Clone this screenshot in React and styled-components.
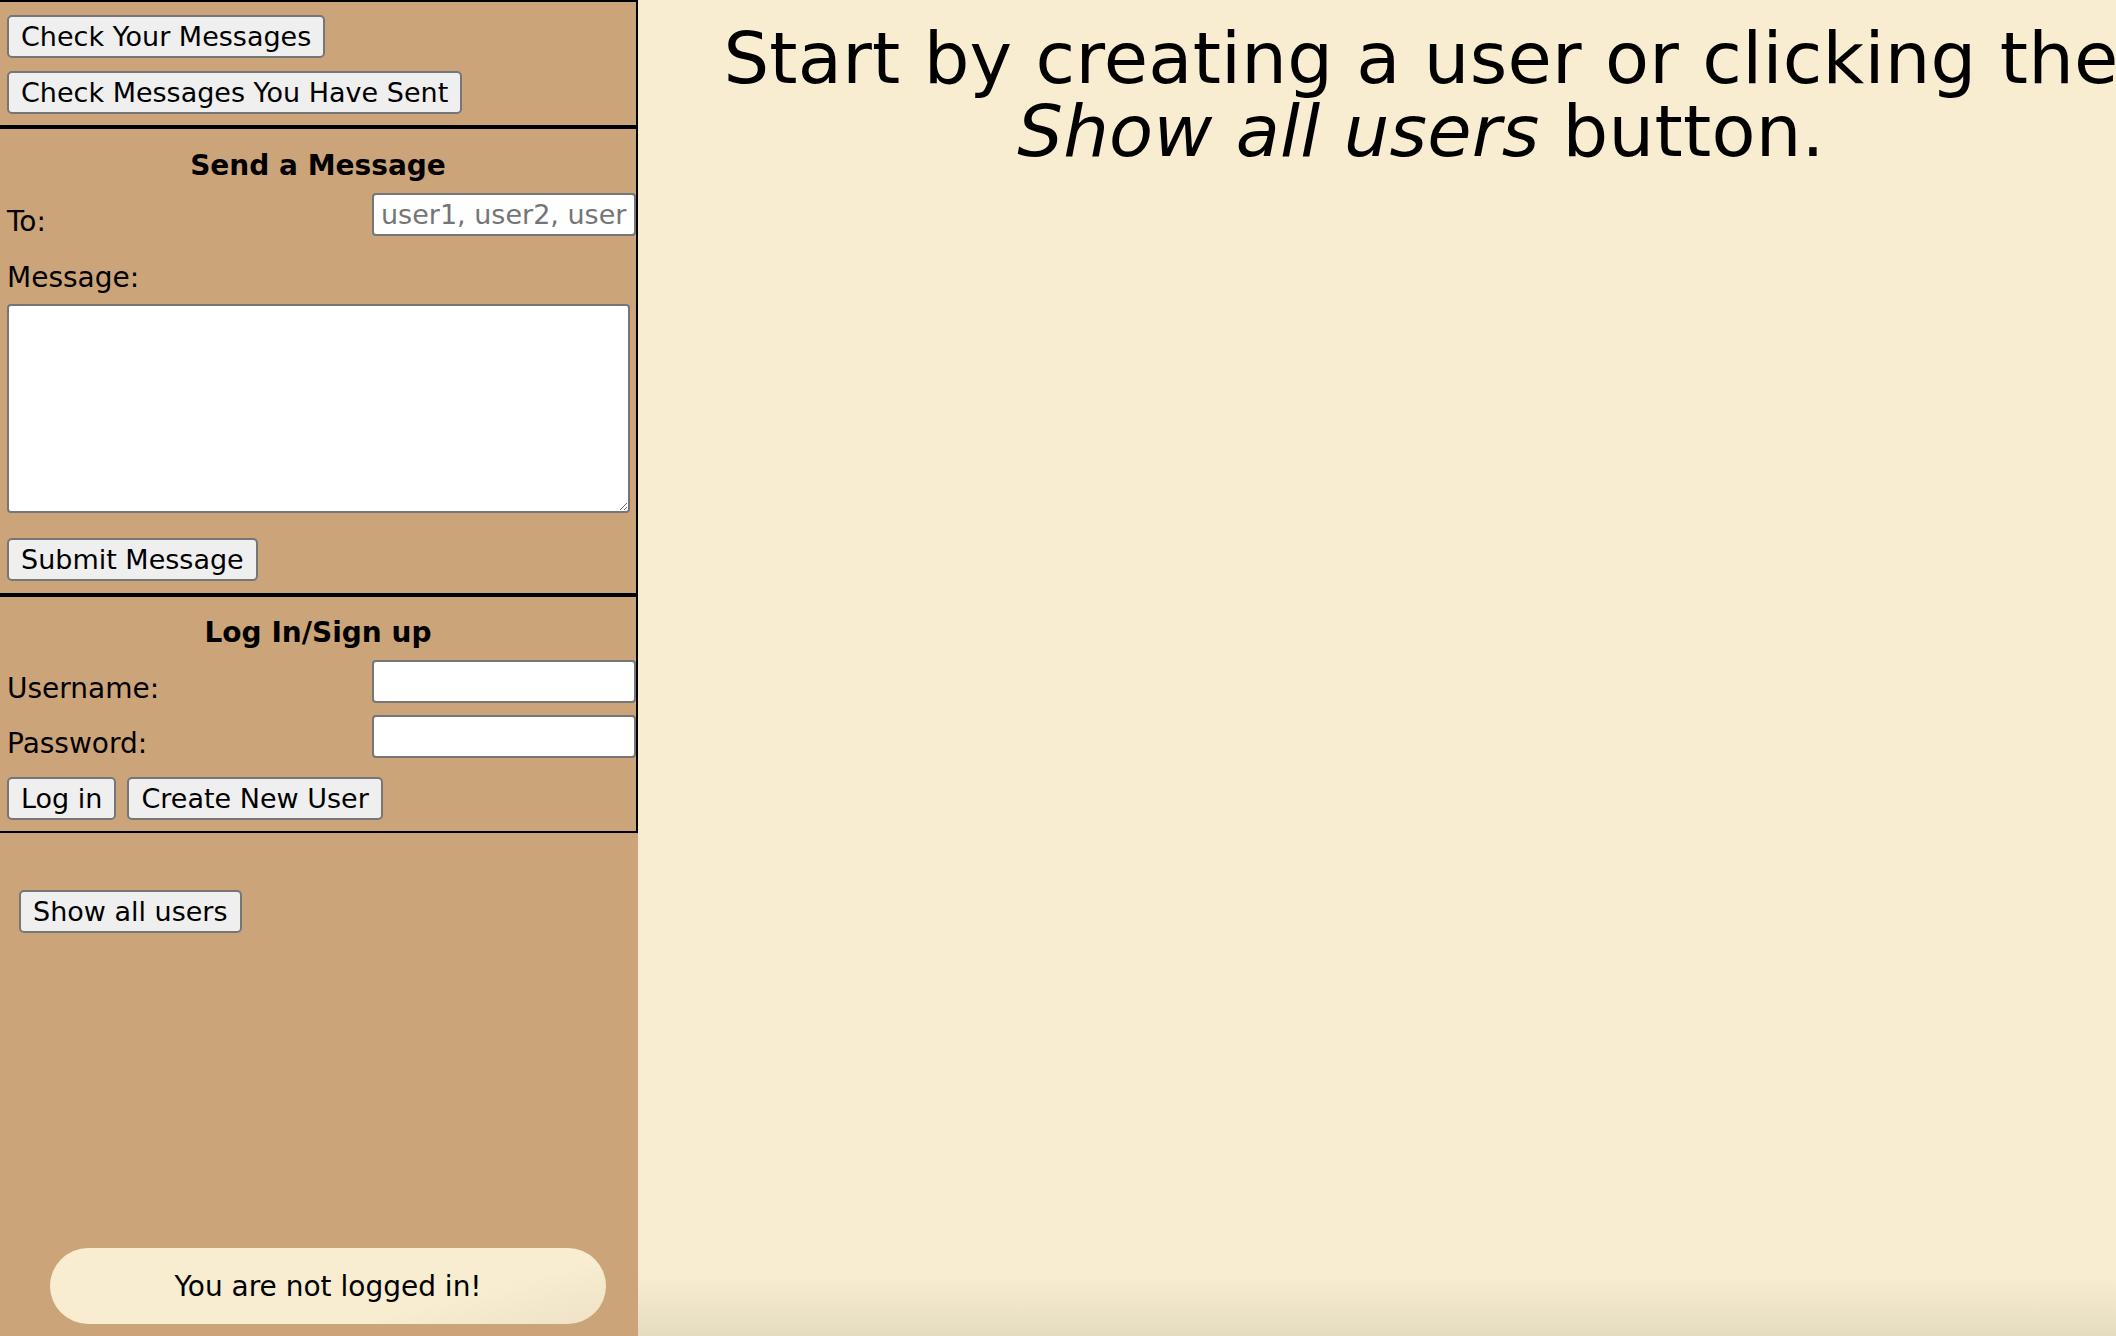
import React from "react";
import styled, { createGlobalStyle } from "styled-components";

const GlobalStyle = createGlobalStyle`
  html, body {
    margin: 0;
    padding: 0;
    height: 100%;
    overflow: hidden;
    font-family: "DejaVu Sans", Verdana, sans-serif;
    color: #000;
  }
  * { box-sizing: border-box; }
`;

const Page = styled.div`
  display: flex;
  width: 100vw;
  height: 100vh;
  overflow: hidden;
`;

const Sidebar = styled.aside`
  flex: 0 0 638px;
  width: 638px;
  height: 100%;
  background: #cca47a;
  display: flex;
  flex-direction: column;
  align-items: stretch;
`;

const Section = styled.section`
  border-top: 2px solid #000;
  border-bottom: 2px solid #000;
  border-right: 2px solid #000;
  padding: ${(p) => p.$pad};
  display: flex;
  flex-direction: column;
  align-items: stretch;
`;

const NavStack = styled.div`
  display: flex;
  flex-direction: column;
  align-items: flex-start;
  gap: 13px;
  padding-left: 7px;
`;

const Button = styled.button`
  font-family: "DejaVu Sans", Verdana, sans-serif;
  font-size: 27px;
  height: 43px;
  padding: 0 12px;
  margin: ${(p) => p.$margin || "0"};
  background: #efefef;
  color: #000;
  border: 2px solid #767676;
  border-radius: 5px;
  white-space: nowrap;
  cursor: pointer;
  flex-shrink: 0;
`;

const Heading = styled.h2`
  margin: 0;
  font-size: 28px;
  font-weight: bold;
  line-height: normal;
  text-align: center;
`;

const Fields = styled.div`
  display: flex;
  flex-direction: column;
  align-items: stretch;
  padding-left: 7px;
`;

const FieldRow = styled.div`
  display: flex;
  justify-content: space-between;
  align-items: flex-end;
  margin-top: ${(p) => p.$top || 0}px;
`;

const Label = styled.label`
  display: block;
  font-size: 28px;
  line-height: normal;
  margin-bottom: ${(p) => (p.$block ? 0 : -2)}px;
  margin-top: ${(p) => p.$top || 0}px;
`;

const TextInput = styled.input`
  width: 264px;
  height: 43px;
  padding: 0 7px;
  font-family: "DejaVu Sans", Verdana, sans-serif;
  font-size: 27px;
  border: 2px solid #767676;
  border-radius: 4px;
  background: #fff;
  color: #000;
  outline: none;
  &::placeholder {
    color: #757575;
  }
`;

const MessageBox = styled.textarea`
  width: 623px;
  height: 209px;
  margin-top: 10px;
  border: 2px solid #767676;
  border-radius: 4px;
  background: #fff;
  font-family: "DejaVu Sans Mono", monospace;
  font-size: 26px;
  outline: none;
`;

const ButtonRow = styled.div`
  display: flex;
  gap: 11px;
  margin-top: ${(p) => p.$top || 0}px;
  align-items: center;
`;

const Footer = styled.div`
  margin-top: auto;
  padding: 0 0 12px 50px;
`;

const StatusPill = styled.div`
  width: 556px;
  height: 76px;
  border-radius: 38px;
  background: linear-gradient(165deg, #f8ecd1 0%, #f8ecd1 70%, #efe3c6 100%);
  display: flex;
  align-items: center;
  justify-content: center;
  font-size: 28px;
`;

const Main = styled.main`
  flex: 1 1 auto;
  position: relative;
  height: 100%;
  background: #f8ecd1;
  padding-left: 81px;
  display: flex;
  align-items: flex-start;
  overflow: hidden;
  &::after {
    content: "";
    position: absolute;
    left: 0;
    right: 0;
    bottom: 0;
    height: 60px;
    background: linear-gradient(to bottom, rgba(229, 220, 192, 0) 0%, rgba(229, 220, 192, 1) 100%);
    pointer-events: none;
  }
`;

const Intro = styled.h1`
  flex: 0 0 1404px;
  width: 1404px;
  margin: 22px 0 0 0;
  font-size: 72px;
  line-height: 73px;
  letter-spacing: 0.25px;
  font-weight: normal;
  text-align: center;
`;

export default function App() {
  return (
    <>
      <GlobalStyle />
      <Page>
        <Sidebar>
          <Section $pad="13px 0 11px 0">
            <NavStack>
              <Button>Check Your Messages</Button>
              <Button>Check Messages You Have Sent</Button>
            </NavStack>
          </Section>

          <Section $pad="20px 0 12px 0">
            <Heading>Send a Message</Heading>
            <Fields>
              <FieldRow $top={11}>
                <Label htmlFor="to">To:</Label>
                <TextInput id="to" placeholder="user1, user2, user3" />
              </FieldRow>
              <Label $block $top={25} htmlFor="msg">
                Message:
              </Label>
              <MessageBox id="msg" />
              <ButtonRow $top={25}>
                <Button>Submit Message</Button>
              </ButtonRow>
            </Fields>
          </Section>

          <Section $pad="19px 0 11px 0">
            <Heading>Log In/Sign up</Heading>
            <Fields>
              <FieldRow $top={11}>
                <Label htmlFor="user">Username:</Label>
                <TextInput id="user" />
              </FieldRow>
              <FieldRow $top={12}>
                <Label htmlFor="pass">Password:</Label>
                <TextInput id="pass" type="password" />
              </FieldRow>
              <ButtonRow $top={19}>
                <Button>Log in</Button>
                <Button>Create New User</Button>
              </ButtonRow>
            </Fields>
          </Section>

          <ButtonRow $top={0}>
            <Button $margin="57px 0 0 19px">Show all users</Button>
          </ButtonRow>

          <Footer>
            <StatusPill>You are not logged in!</StatusPill>
          </Footer>
        </Sidebar>

        <Main>
          <Intro>
            Start by creating a user or clicking the <em>Show all users</em> button.
          </Intro>
        </Main>
      </Page>
    </>
  );
}
